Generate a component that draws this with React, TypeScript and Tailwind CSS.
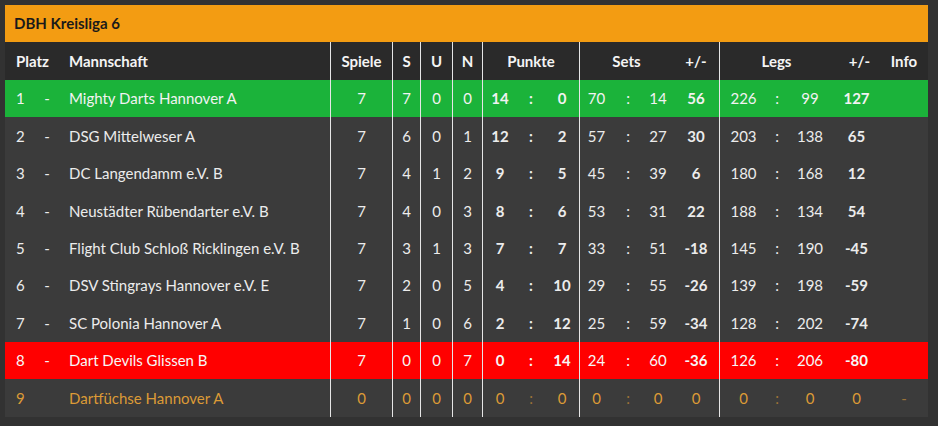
import React from "react";

type Row = {
  pos: string;
  dash: string;
  team: string;
  sp: number;
  s: number;
  u: number;
  n: number;
  p: [number, number];
  sets: [number, number, number];
  legs: [number, number, number];
  info?: string;
  tone: "win" | "lose" | "plain" | "fresh";
};

const ROWS: Row[] = [
  { pos: "1", dash: "-", team: "Mighty Darts Hannover A", sp: 7, s: 7, u: 0, n: 0, p: [14, 0], sets: [70, 14, 56], legs: [226, 99, 127], tone: "win" },
  { pos: "2", dash: "-", team: "DSG Mittelweser A", sp: 7, s: 6, u: 0, n: 1, p: [12, 2], sets: [57, 27, 30], legs: [203, 138, 65], tone: "plain" },
  { pos: "3", dash: "-", team: "DC Langendamm e.V. B", sp: 7, s: 4, u: 1, n: 2, p: [9, 5], sets: [45, 39, 6], legs: [180, 168, 12], tone: "plain" },
  { pos: "4", dash: "-", team: "Neustädter Rübendarter e.V. B", sp: 7, s: 4, u: 0, n: 3, p: [8, 6], sets: [53, 31, 22], legs: [188, 134, 54], tone: "plain" },
  { pos: "5", dash: "-", team: "Flight Club Schloß Ricklingen e.V. B", sp: 7, s: 3, u: 1, n: 3, p: [7, 7], sets: [33, 51, -18], legs: [145, 190, -45], tone: "plain" },
  { pos: "6", dash: "-", team: "DSV Stingrays Hannover e.V. E", sp: 7, s: 2, u: 0, n: 5, p: [4, 10], sets: [29, 55, -26], legs: [139, 198, -59], tone: "plain" },
  { pos: "7", dash: "-", team: "SC Polonia Hannover A", sp: 7, s: 1, u: 0, n: 6, p: [2, 12], sets: [25, 59, -34], legs: [128, 202, -74], tone: "plain" },
  { pos: "8", dash: "-", team: "Dart Devils Glissen B", sp: 7, s: 0, u: 0, n: 7, p: [0, 14], sets: [24, 60, -36], legs: [126, 206, -80], tone: "lose" },
  { pos: "9", dash: "", team: "Dartfüchse Hannover A", sp: 0, s: 0, u: 0, n: 0, p: [0, 0], sets: [0, 0, 0], legs: [0, 0, 0], info: "-", tone: "fresh" },
];

const COLS =
  "grid grid-cols-[31px_22px_272px_62px_28px_32px_30px_35px_28px_34px_34px_30px_30px_46px_48px_20px_46px_47px_48px]";

const TONE: Record<Row["tone"], string> = {
  win: "bg-[#1bb33a] text-[#f2f2f2]",
  lose: "bg-[#ff0000] text-[#f7f7f7]",
  plain: "bg-[#3b3b3b] text-[#ececec]",
  fresh: "bg-[#3b3b3b] text-[#dc9a36]",
};

const line = "border-l border-[#e6e6e6]";

export default function App() {
  return (
    <div className="min-h-[426px] bg-[#323232] pt-[5px] pl-[5px] font-['Lato','Liberation_Sans',sans-serif] text-[15px]">
      <div className="w-[923px]">
        <div className="flex h-[37px] items-center bg-[#f39c12] pl-[9px] font-bold text-[#1a1a1a]">
          DBH Kreisliga 6
        </div>

        <div className={`${COLS} h-[38px] items-stretch bg-[#2a2a2a] font-bold text-[#f4f4f4]`}>
          <div className="col-span-2 flex items-center pl-[11px]">Platz</div>
          <div className="flex items-center pl-[11px]">Mannschaft</div>
          <div className={`${line} flex items-center justify-center`}>Spiele</div>
          <div className={`${line} flex items-center justify-center`}>S</div>
          <div className={`${line} flex items-center justify-center`}>U</div>
          <div className={`${line} flex items-center justify-center`}>N</div>
          <div className={`${line} col-span-3 flex items-center justify-center`}>Punkte</div>
          <div className={`${line} col-span-3 flex items-center justify-center`}>Sets</div>
          <div className="flex items-center justify-center">+/-</div>
          <div className={`${line} col-span-3 flex items-center justify-center`}>Legs</div>
          <div className="flex items-center justify-center pl-[6px]">+/-</div>
          <div className="flex items-center justify-center">Info</div>
        </div>

        {ROWS.map((r) => {
          const fresh = r.tone === "fresh";
          const strong = fresh ? "" : "font-bold";
          const colon = fresh ? "opacity-60" : "";
          return (
            <div key={r.pos} className={`${COLS} h-[37.4px] ${TONE[r.tone]}`}>
              <div className="flex items-center pl-[11px]">{r.pos}</div>
              <div className="flex items-center justify-center">{r.dash}</div>
              <div className="flex items-center pl-[11px]">{r.team}</div>
              <div className={`${line} flex items-center justify-center`}>{r.sp}</div>
              <div className={`${line} flex items-center justify-center`}>{r.s}</div>
              <div className={`${line} flex items-center justify-center`}>{r.u}</div>
              <div className={`${line} flex items-center justify-center`}>{r.n}</div>
              <div className={`${line} flex items-center justify-center ${strong}`}>{r.p[0]}</div>
              <div className={`flex items-center justify-center ${strong} ${colon}`}>:</div>
              <div className={`flex items-center justify-center ${strong}`}>{r.p[1]}</div>
              <div className={`${line} flex items-center justify-center`}>{r.sets[0]}</div>
              <div className={`flex items-center justify-center ${colon}`}>:</div>
              <div className="flex items-center justify-center">{r.sets[1]}</div>
              <div className={`flex items-center justify-center ${strong}`}>{r.sets[2]}</div>
              <div className={`${line} flex items-center justify-center`}>{r.legs[0]}</div>
              <div className={`flex items-center justify-center ${colon}`}>:</div>
              <div className="flex items-center justify-center">{r.legs[1]}</div>
              <div className={`flex items-center justify-center ${strong}`}>{r.legs[2]}</div>
              <div className="flex items-center justify-center opacity-60">{r.info ?? ""}</div>
            </div>
          );
        })}
      </div>
    </div>
  );
}
